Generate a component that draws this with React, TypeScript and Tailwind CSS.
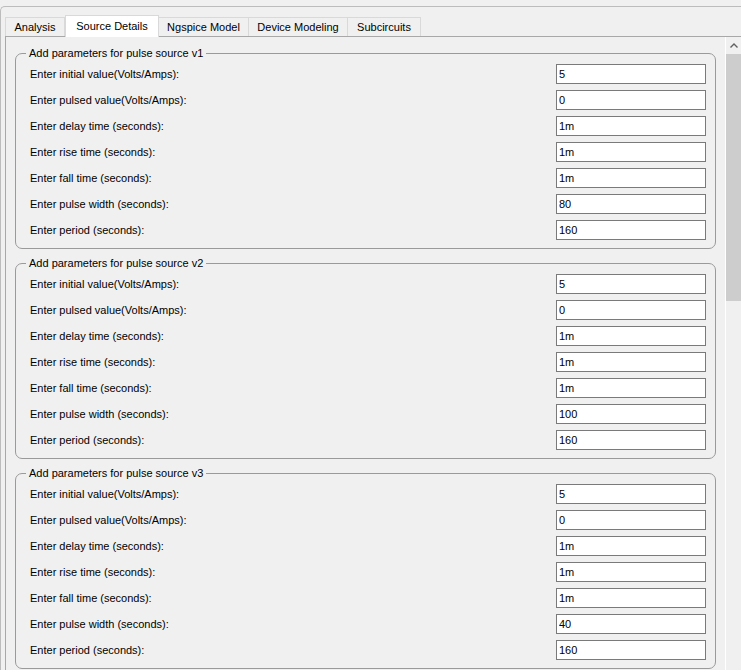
import React from "react";

const labels = [
  "Enter initial value(Volts/Amps):",
  "Enter pulsed value(Volts/Amps):",
  "Enter delay time (seconds):",
  "Enter rise time (seconds):",
  "Enter fall time (seconds):",
  "Enter pulse width (seconds):",
  "Enter period (seconds):",
];

const sources = [
  { name: "v1", values: ["5", "0", "1m", "1m", "1m", "80", "160"] },
  { name: "v2", values: ["5", "0", "1m", "1m", "1m", "100", "160"] },
  { name: "v3", values: ["5", "0", "1m", "1m", "1m", "40", "160"] },
];

const tabs = [
  { label: "Analysis", width: "w-[60px]" },
  { label: "Source Details", width: "w-[94px]", active: true },
  { label: "Ngspice Model", width: "w-[91px]" },
  { label: "Device Modeling", width: "w-[100px]" },
  { label: "Subcircuits", width: "w-[74px]" },
];

const SourceGroup = ({ name, values }: { name: string; values: string[] }) => (
  <fieldset className="border border-[#9a9a9a] rounded-[7px] pl-[14px] pr-[9px] pt-[3px] pb-[8px]">
    <legend className="ml-[-4px] px-[3px] leading-[16px]">
      Add parameters for pulse source {name}
    </legend>
    <div className="flex flex-col gap-[6px]">
      {labels.map((label, i) => (
        <div key={label} className="flex h-[20px] items-center justify-between">
          <span>{label}</span>
          <input
            readOnly
            value={values[i]}
            className="h-[20px] w-[150px] border border-[#7a7a7a] bg-white px-[2px] text-[11px] text-black outline-none"
          />
        </div>
      ))}
    </div>
  </fieldset>
);

export default function App() {
  return (
    <div className="h-[670px] w-[741px] overflow-hidden bg-[#f0f0f0] pt-[6px] font-['Liberation_Sans',Arial,sans-serif] text-[11px] text-black">
      <div className="flex h-full flex-col rounded-tl-[5px] border-l border-t border-[#bcbcbc] pl-[4px] pt-[8px]">
        {/* Tabs */}
        <div className="relative z-10 flex h-[21px] items-end">
          {tabs.map((t) =>
            t.active ? (
              <div
                key={t.label}
                className={`${t.width} -mb-px flex h-[22px] items-center justify-center border-x border-t border-[#d9d9d9] bg-white`}
              >
                {t.label}
              </div>
            ) : (
              <div
                key={t.label}
                className={`${t.width} -ml-px first:ml-0 flex h-[19px] items-center justify-center border border-b-0 border-[#d9d9d9] bg-[#f0f0f0] pt-px`}
              >
                {t.label}
              </div>
            )
          )}
        </div>

        {/* Tab pane */}
        <div className="flex flex-1 border-l border-t border-[#a8a8a8]">
          <div className="flex flex-1 flex-col gap-[6px] px-[9px] pt-[8px]">
            {sources.map((s) => (
              <SourceGroup key={s.name} name={s.name} values={s.values} />
            ))}
          </div>

          {/* Scrollbar */}
          <div className="flex w-[16px] flex-col border-l border-white bg-[#f0f0f0]">
            <div className="flex h-[17px] items-center justify-center">
              <svg width="8" height="5" viewBox="0 0 8 5">
                <path d="M0.5 4.5 L4 1 L7.5 4.5" fill="none" stroke="#606060" strokeWidth="1.4" />
              </svg>
            </div>
            <div className="h-[247px] bg-[#cdcdcd]" />
          </div>
        </div>
      </div>
    </div>
  );
}
